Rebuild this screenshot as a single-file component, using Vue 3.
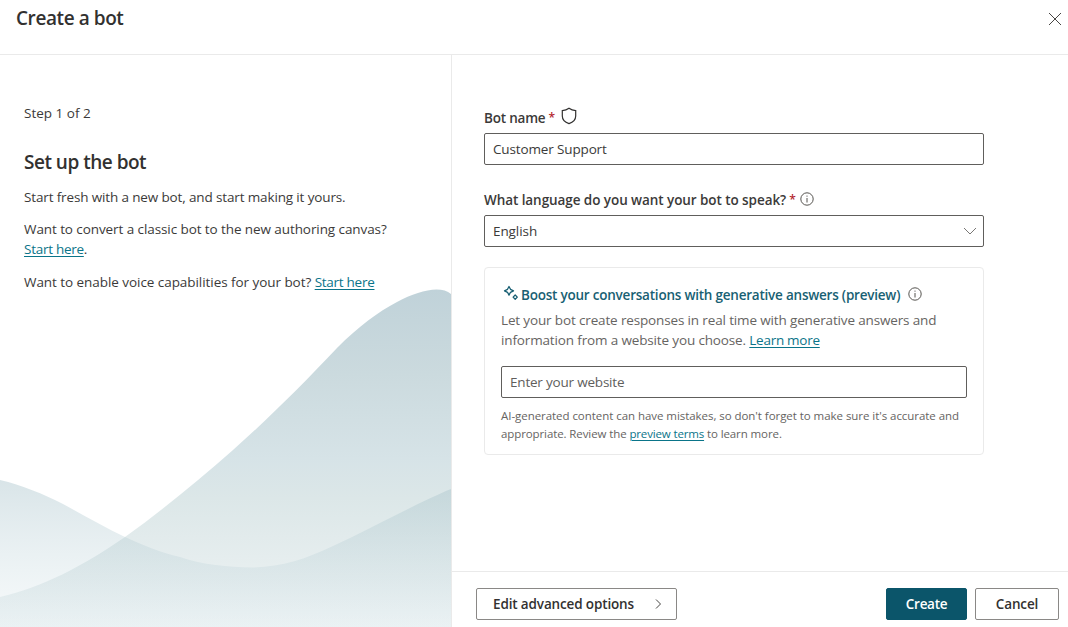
<script setup>
import { ref } from 'vue'

const botName = ref('Customer Support')
const website = ref('')
</script>

<template>
  <div class="dialog">
    <header class="header">
      <h1 class="title">Create a bot</h1>
      <svg class="close" width="14" height="14" viewBox="0 0 14 14"><path d="M1 1 13 13M13 1 1 13" /></svg>
    </header>
    <div class="body">
      <aside class="side">
        <svg class="waves" width="451" height="340" viewBox="0 0 451 340">
          <defs>
            <linearGradient id="tall" x1="0" y1="0" x2="0" y2="1">
              <stop offset="0" stop-color="#c0d2d9" />
              <stop offset=".25" stop-color="#cbdade" />
              <stop offset=".5" stop-color="#d6e3e7" />
              <stop offset=".62" stop-color="#dce7e8" />
              <stop offset=".85" stop-color="#e8eff0" />
              <stop offset="1" stop-color="#f1f6f7" />
            </linearGradient>
            <linearGradient id="low" gradientUnits="userSpaceOnUse" x1="0" y1="193" x2="0" y2="340">
              <stop offset="0" stop-color="#a4c0c8" stop-opacity=".42" />
              <stop offset="1" stop-color="#c8dce2" stop-opacity=".16" />
            </linearGradient>
          </defs>
          <path fill="url(#tall)" d="M0 310C43 300 83 279 125 250C164 222 200 192 233 163C268 132 304 96 337 61C359 39 378 25 397 15C419 3 441-2 451 7V340H0Z" />
          <path fill="url(#low)" d="M0 193C22 198 43 207 63 217C85 229 104 240 125 250C143 258 161 266 180 270C203 278 228 280 252 280.500C281 280 306 272 333 259C355 249 377 237 400 226C418 217 436 208 451 202V340H0Z" />
        </svg>
        <p class="step">Step 1 of 2</p>
        <h2 class="subtitle">Set up the bot</h2>
        <p class="fresh">Start fresh with a new bot, and start making it yours.</p>
        <p class="classic">Want to convert a classic bot to the new authoring canvas?<br><a>Start here</a>.</p>
        <p class="voice">Want to enable voice capabilities for your bot? <a>Start here</a></p>
      </aside>
      <main class="main">
        <form class="form">
          <div class="label first">
            <span class="name-label">Bot name</span><span class="req">*</span>
            <svg class="shield" width="16" height="18" viewBox="0 0 16 18"><path d="M8 1.300C6 2.800 3.800 3.500 1.300 3.600V9C1.300 12.800 4 15.300 8 16.600C12 15.300 14.700 12.800 14.700 9V3.600C12.200 3.500 10 2.800 8 1.300Z" /></svg>
          </div>
          <div class="field name"><input v-model="botName"></div>
          <div class="label second">
            <span class="lang-label">What language do you want your bot to speak?</span><span class="req">*</span>
            <svg class="info" width="14" height="14" viewBox="0 0 14 14"><circle cx="7" cy="7" r="6.200" /><path d="M7 6V10.500M7 3.600V4.700" /></svg>
          </div>
          <div class="field select"><span>English</span>
            <svg class="chev" width="14" height="8" viewBox="0 0 14 8"><path d="M1 1 7 7 13 1" /></svg>
          </div>
          <section class="card">
            <div class="boost">
              <svg class="spark" width="16" height="16" viewBox="0 0 16 16"><path d="M6 1.500 7.500 4.300 10.500 5.800 7.500 7.300 6 10.100 4.500 7.300 1.500 5.800 4.500 4.300Z" /><path d="M12.200 10 14.300 12.100 12.200 14.200 10.100 12.100Z" /></svg>
              <span class="boost-label">Boost your conversations with generative answers (preview)</span>
              <svg class="info boost-info" width="14" height="14" viewBox="0 0 14 14"><circle cx="7" cy="7" r="6.200" /><path d="M7 6V10.500M7 3.600V4.700" /></svg>
            </div>
            <p class="desc">Let your bot create responses in real time with generative answers and<br>information from a website you choose. <a>Learn more</a></p>
            <div class="field site"><input v-model="website" placeholder="Enter your website"></div>
            <p class="note">AI-generated content can have mistakes, so don't forget to make sure it's accurate and<br><span class="terms">appropriate. Review the <a>preview terms</a> to learn more.</span></p>
          </section>
        </form>
        <footer class="footer">
          <button class="btn adv"><span>Edit advanced options</span><svg width="7" height="12" viewBox="0 0 7 12"><path d="M1 1.500 5.500 6 1 10.500" /></svg></button>
          <button class="btn primary">Create</button>
          <button class="btn cancel">Cancel</button>
        </footer>
      </main>
    </div>
  </div>
</template>

<style>
body { margin: 0; background: #fff; }
</style>

<style scoped>
* { box-sizing: border-box; }
.dialog { width: 1068px; height: 627px; display: flex; flex-direction: column; overflow: hidden; background: #fff; color: #3b3a39; font: 13.5px/20px "Open Sans", "Noto Sans", sans-serif; white-space: nowrap; }
p, h1, h2 { margin: 0; }
a { color: #0a7489; letter-spacing: -.27px; text-decoration: underline; text-underline-offset: 2px; text-decoration-thickness: 1px; }
svg { fill: none; stroke: #484644; stroke-width: 1; flex: none; }
.header { height: 55px; flex: none; display: flex; justify-content: space-between; padding: 4px 6px 0 16px; border-bottom: 1px solid #eaeaea; }
.title, .subtitle { font-size: 19px; line-height: 28px; font-weight: 600; letter-spacing: -.5px; color: #323130; }
.title { letter-spacing: -.42px; }
.close { margin-top: 8px; }
.body { flex: 1; display: flex; min-height: 0; }
.side { width: 452px; flex: none; position: relative; border-right: 1px solid #eaeaea; padding: 48px 24px 0; }
.side p, .side h2 { position: relative; }
.waves { position: absolute; left: 0; bottom: 0; stroke: none; }
.subtitle { margin-top: 25px; }
.fresh { margin-top: 11px; letter-spacing: -.14px; }
.classic { margin-top: 12px; letter-spacing: -.085px; }
.voice { margin-top: 13px; letter-spacing: -.055px; }
.main { flex: 1; display: flex; flex-direction: column; }
.form { flex: 1; padding: 53px 84px 0 32px; }
.label { display: flex; height: 20px; font-weight: 600; }
.name-label { letter-spacing: -.2px; }
.lang-label { letter-spacing: -.07px; }
.req { width: 6px; color: #b3262e; margin-left: 3px; font-size: 12px; }
.shield { margin: -1px 0 0 7px; stroke: #323130; stroke-width: 1.200; }
.field { height: 32px; border: 1px solid #605e5c; border-radius: 2px; display: flex; align-items: center; padding: 0 8px; }
.first + .field { margin-top: 5px; }
.name { letter-spacing: -.14px; }
input { border: 0; outline: 0; padding: 0; width: 100%; background: none; font: inherit; color: inherit; letter-spacing: inherit; }
input::placeholder { color: #605e5c; opacity: 1; }
.second { margin-top: 25px; }
.select { margin-top: 5px; justify-content: space-between; padding-right: 6px; }
.select span { letter-spacing: -.08px; }
.chev { stroke: #797775; }
.info { margin: 2px 0 0 5px; stroke: #55534f; stroke-width: 1; }
.card { margin-top: 20px; height: 188px; border: 1px solid #eaeaea; border-radius: 4px; padding: 17px 16px 0; color: #666462; }
.boost { display: flex; height: 20px; color: #185f73; font-weight: 600; }
.boost-label { letter-spacing: -.22px; }
.spark { stroke: #185f73; stroke-width: 1.300; stroke-linejoin: round; margin: 0 2px 0 2px; }
.boost-info { margin: 2px 0 0 8px; }
.desc { margin-top: 5px; letter-spacing: -.145px; }
.site { margin-top: 16px; letter-spacing: -.2px; }
.note { margin-top: 9px; font-size: 11.500px; line-height: 18px; letter-spacing: -.05px; }
.terms { letter-spacing: -.1px; }
.terms a { letter-spacing: -.15px; }
.footer { height: 56px; flex: none; border-top: 1px solid #eaeaea; display: flex; padding: 16px 9px 0 24px; }
.btn { height: 32px; border: 1px solid #8a8886; border-radius: 2px; background: #fff; padding: 0; color: #323130; font: 600 13.500px/20px "Open Sans", "Noto Sans", sans-serif; letter-spacing: -.14px; }
.adv { width: 201px; display: flex; align-items: center; justify-content: space-between; padding: 0 14px 0 16px; }
.primary { width: 81px; margin-left: auto; background: #0b556a; border-color: #0b556a; color: #fff; letter-spacing: -.3px; }
.cancel { width: 84px; margin-left: 8px; }
</style>
